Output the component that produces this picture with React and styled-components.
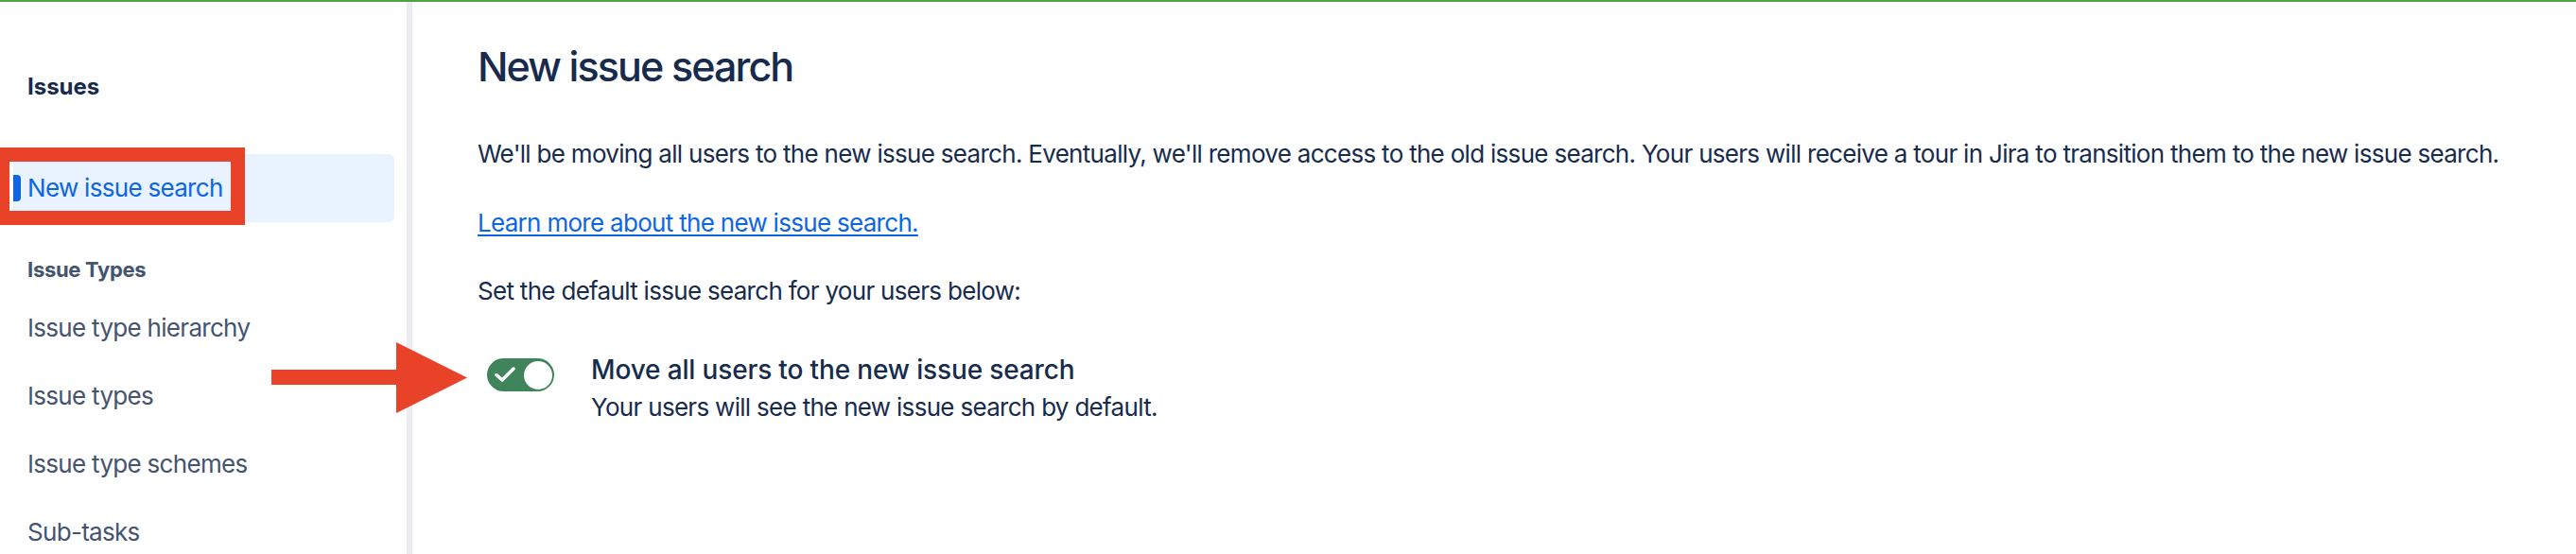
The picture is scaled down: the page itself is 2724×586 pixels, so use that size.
import styled, { createGlobalStyle } from "styled-components";

const GlobalStyle = createGlobalStyle`
  html, body {
    margin: 0;
    padding: 0;
    background: #ffffff;
    overflow: hidden;
  }
  body {
    font-family: Inter, "Noto Sans", "Liberation Sans", sans-serif;
    color: #172b4d;
  }
`;

const navItems = [
  "Issue type hierarchy",
  "Issue types",
  "Issue type schemes",
  "Sub-tasks",
];

const App = () => {
  return (
    <Page>
      <GlobalStyle />
      <TopRule />
      <Layout>
        <Sidebar>
          <SideHeading>Issues</SideHeading>
          <NavItem $selected>
            <Indicator />
            New issue search
          </NavItem>
          <SectionHeading>Issue Types</SectionHeading>
          {navItems.map((label) => (
            <NavItem key={label}>{label}</NavItem>
          ))}
        </Sidebar>
        <Main>
          <Title>New issue search</Title>
          <Paragraph $gap={49}>
            We'll be moving all users to the new issue search. Eventually, we'll remove
            access to the old issue search. Your users will receive a tour in Jira to
            transition them to the new issue search.
          </Paragraph>
          <Paragraph $gap={37}>
            <Link href="#">Learn more about the new issue search.</Link>
          </Paragraph>
          <Paragraph $gap={36}>Set the default issue search for your users below:</Paragraph>
          <ToggleRow>
            <Toggle>
              <Check viewBox="0 0 22 18">
                <polyline points="2,9.5 8,15 20,3" />
              </Check>
              <Knob />
            </Toggle>
            <ToggleText>
              <ToggleTitle>Move all users to the new issue search</ToggleTitle>
              <ToggleHint>Your users will see the new issue search by default.</ToggleHint>
            </ToggleText>
          </ToggleRow>
        </Main>
      </Layout>
      <Highlight />
      <Arrow viewBox="0 0 207 75">
        <polygon points="0,29 132,29 132,0 207,37.5 132,75 132,45 0,45" />
      </Arrow>
    </Page>
  );
};

const Page = styled.div`
  position: relative;
  width: 100%;
  height: 100vh;
  display: flex;
  flex-direction: column;
  overflow: hidden;
`;

const TopRule = styled.div`
  height: 2px;
  background: #4fa346;
  flex-shrink: 0;
`;

const Layout = styled.div`
  flex: 1;
  display: flex;
`;

const Sidebar = styled.nav`
  width: 436px;
  flex-shrink: 0;
  box-sizing: border-box;
  border-right: 6px solid #ebecf0;
  padding: 0 13px 0 14px;
  display: flex;
  flex-direction: column;
`;

const SideHeading = styled.h2`
  margin: 74px 0 0;
  padding-left: 15px;
  font-size: 24px;
  line-height: 32px;
  font-weight: 700;
  color: #172b4d;
`;

const SectionHeading = styled.h3`
  margin: 36px 0 12px;
  padding-left: 15px;
  font-size: 22px;
  line-height: 28px;
  font-weight: 700;
  letter-spacing: -0.3px;
  color: #44546f;
`;

const NavItem = styled.div`
  position: relative;
  height: 72px;
  flex-shrink: 0;
  display: flex;
  align-items: center;
  padding-left: 15px;
  border-radius: 6px;
  font-size: 26px;
  line-height: 36px;
  letter-spacing: -0.7px;
  color: ${(p) => (p.$selected ? "#0c66e4" : "#44546f")};
  background: ${(p) => (p.$selected ? "#e9f2ff" : "transparent")};
  margin-top: ${(p) => (p.$selected ? "55px" : "0")};
`;

const Indicator = styled.span`
  position: absolute;
  left: 0;
  top: 22px;
  width: 8px;
  height: 28px;
  border-radius: 0 4px 4px 0;
  background: #0c66e4;
`;

const Main = styled.main`
  flex: 1;
  padding: 42px 0 0 69px;
`;

const Title = styled.h1`
  margin: 0;
  font-size: 43px;
  line-height: 52px;
  font-weight: 500;
  letter-spacing: -1.9px;
  color: #172b4d;
`;

const Paragraph = styled.p`
  margin: ${(p) => p.$gap}px 0 0;
  font-size: 26px;
  line-height: 36px;
  letter-spacing: -0.7px;
  color: #172b4d;
`;

const Link = styled.a`
  color: #0c66e4;
  text-decoration: underline;
  text-underline-offset: 3px;
`;

const ToggleRow = styled.div`
  margin-top: 53px;
  padding-left: 10px;
  display: flex;
  align-items: flex-start;
`;

const Toggle = styled.div`
  position: relative;
  width: 71px;
  height: 35px;
  flex-shrink: 0;
  border-radius: 18px;
  background: #3f845b;
`;

const Check = styled.svg`
  position: absolute;
  left: 8px;
  top: 8px;
  width: 22px;
  height: 18px;
  fill: none;
  stroke: #ffffff;
  stroke-width: 3.5;
  stroke-linecap: round;
  stroke-linejoin: round;
`;

const Knob = styled.span`
  position: absolute;
  right: 2px;
  top: 2.5px;
  width: 30px;
  height: 30px;
  border-radius: 50%;
  background: #ffffff;
`;

const ToggleText = styled.div`
  margin: -6px 0 0 39px;
  display: flex;
  flex-direction: column;
`;

const ToggleTitle = styled.div`
  font-size: 28px;
  line-height: 36px;
  font-weight: 500;
  letter-spacing: -0.15px;
  color: #172b4d;
`;

const ToggleHint = styled.div`
  margin-top: 4px;
  font-size: 26px;
  line-height: 36px;
  letter-spacing: -0.7px;
  color: #172b4d;
`;

const Highlight = styled.div`
  position: absolute;
  left: -5px;
  top: 156px;
  width: 264px;
  height: 82px;
  box-sizing: border-box;
  border: 15px solid #e84229;
`;

const Arrow = styled.svg`
  position: absolute;
  left: 287px;
  top: 362px;
  width: 207px;
  height: 75px;
  fill: #e84229;
`;

export default App;
